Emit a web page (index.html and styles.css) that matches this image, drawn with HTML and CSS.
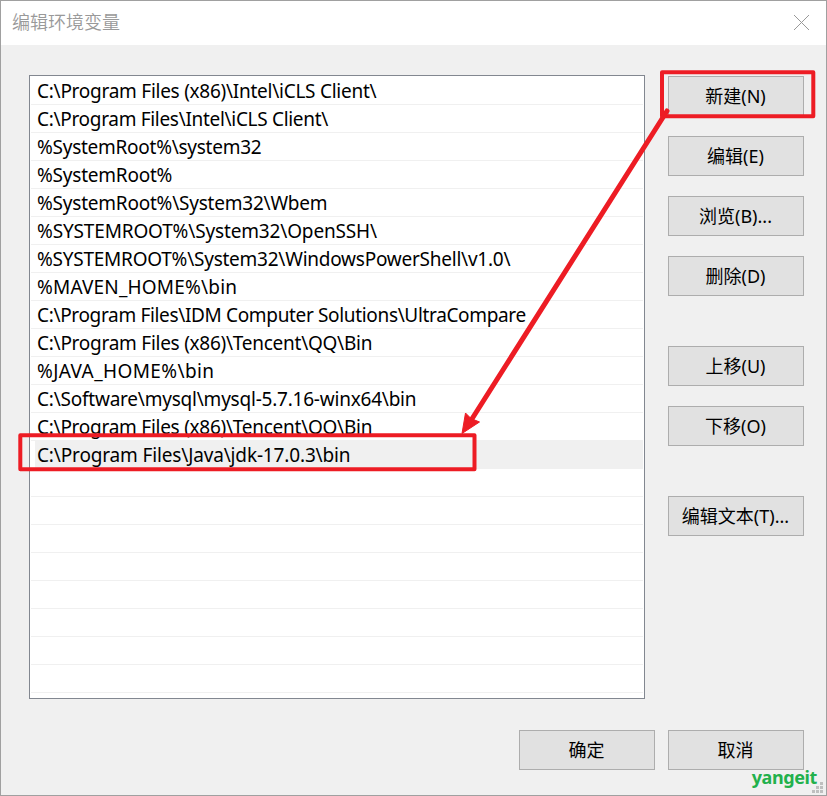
FILE: index.html
```html
<!DOCTYPE html>
<html lang="zh-CN">
<head>
<meta charset="utf-8">
<title>编辑环境变量</title>
<link rel="stylesheet" href="styles.css">
</head>
<body>
<main class="dialog">
  <header class="titlebar">
    <h1 class="title">编辑环境变量</h1>
    <svg class="close" viewBox="0 0 17 17" width="17" height="17"><path d="M1 1L16 16M16 1L1 16"/></svg>
  </header>
  <div class="content">
    <ul class="list">
      <li class="row">C:\Program Files (x86)\Intel\iCLS Client\</li>
      <li class="row">C:\Program Files\Intel\iCLS Client\</li>
      <li class="row">%SystemRoot%\system32</li>
      <li class="row">%SystemRoot%</li>
      <li class="row">%SystemRoot%\System32\Wbem</li>
      <li class="row">%SYSTEMROOT%\System32\OpenSSH\</li>
      <li class="row">%SYSTEMROOT%\System32\WindowsPowerShell\v1.0\</li>
      <li class="row">%MAVEN_HOME%\bin</li>
      <li class="row">C:\Program Files\IDM Computer Solutions\UltraCompare</li>
      <li class="row">C:\Program Files (x86)\Tencent\QQ\Bin</li>
      <li class="row">%JAVA_HOME%\bin</li>
      <li class="row">C:\Software\mysql\mysql-5.7.16-winx64\bin</li>
      <li class="row">C:\Program Files (x86)\Tencent\QQ\Bin</li>
      <li class="row selected">C:\Program Files\Java\jdk-17.0.3\bin</li>
      <li class="row"></li><li class="row"></li><li class="row"></li><li class="row"></li>
      <li class="row"></li><li class="row"></li><li class="row"></li><li class="row"></li>
    </ul>
    <div class="actions">
      <button class="btn">新建(N)</button>
      <button class="btn">编辑(E)</button>
      <button class="btn">浏览(B)...</button>
      <button class="btn">删除(D)</button>
      <button class="btn spaced">上移(U)</button>
      <button class="btn">下移(O)</button>
      <button class="btn spaced">编辑文本(T)...</button>
    </div>
  </div>
  <footer class="footer">
    <button class="btn">确定</button>
    <button class="btn">取消</button>
  </footer>
  <span class="watermark">yangeit</span>
  <svg class="grip" viewBox="0 0 11 11" width="11" height="11"><path d="M8 0h3v3h-3zM4 4h3v3h-3zM8 4h3v3h-3zM0 8h3v3h-3zM4 8h3v3h-3zM8 8h3v3h-3z"/></svg>
  <svg class="annotations" viewBox="0 0 827 796" width="827" height="796">
    <rect x="662" y="72.300" width="151.300" height="44"/>
    <rect x="20.300" y="435.300" width="454.200" height="34"/>
    <path class="line" d="M667 111L470 422"/>
    <path class="head" d="M462 433.500L465.500 413L471 418.500L479.500 422Z"/>
  </svg>
</main>
</body>
</html>
```
FILE: styles.css
```css
* { box-sizing: border-box; }
body { margin: 0; font-family: "Noto Sans", "Noto Sans CJK SC", sans-serif; }
.dialog {
  position: relative;
  width: 827px;
  height: 796px;
  overflow: hidden;
  background: #f0f0f0;
  border: 1px solid #a0a0a0;
}
.titlebar {
  display: flex;
  align-items: center;
  justify-content: space-between;
  height: 44px;
  padding: 0 16px 2px 11px;
  background: #fff;
}
.title { margin: 0 0 2px; color: #999; font: 350 18px/40px "Noto Sans CJK SC", sans-serif; }
.close { fill: none; stroke: #999; stroke-width: 1; }
.content { display: flex; gap: 23px; padding: 30px 22px 0 28px; }
.list {
  width: 616px;
  height: 624px;
  margin: 0;
  padding: 1px;
  overflow: hidden;
  list-style: none;
  background: #fff;
  border: 1px solid #828790;
}
.row {
  height: 28px;
  padding-left: 6px;
  border-bottom: 1px solid #f0f0f0;
  color: #000;
  font-size: 19px;
  line-height: 28px;
  letter-spacing: -0.26px;
  white-space: pre;
}
.row:nth-child(2) { letter-spacing: -0.31px; }
.row:nth-child(4), .row:nth-child(5), .row:nth-child(12) { letter-spacing: -0.22px; }
.row:nth-child(6), .row:nth-child(14) { letter-spacing: -0.15px; }
.row:nth-child(7) { letter-spacing: -0.24px; }
.row:nth-child(8) { letter-spacing: 0.19px; }
.row:nth-child(9) { letter-spacing: -0.34px; }
.row:nth-child(11) { letter-spacing: 0.4px; }
.selected { margin-left: 4px; padding-left: 2px; background: #f0f0f0; }
.actions { display: flex; flex-direction: column; gap: 20px; padding-top: 1px; }
.btn {
  width: 136px;
  height: 40px;
  padding: 0 1px 0 0;
  background: #e1e1e1;
  border: 1px solid #adadad;
  color: #000;
  font: 400 18px/38px "Noto Sans", "Noto Sans CJK SC", sans-serif;
}
.spaced { margin-top: 30px; }
.footer { display: flex; justify-content: flex-end; gap: 13px; padding: 31px 22px 0 0; }
.watermark {
  position: absolute;
  right: 9px;
  bottom: 5px;
  color: #22b14c;
  font: 700 18px/26px "Noto Sans", sans-serif;
  letter-spacing: -0.4px;
}
.grip { position: absolute; right: 3px; bottom: 2px; fill: #bfbfbf; }
.annotations { position: absolute; left: -1px; top: -1px; pointer-events: none; }
.annotations rect, .annotations .line { fill: none; stroke: #ed1c24; stroke-width: 4; stroke-linejoin: round; stroke-linecap: round; }
.annotations .line { stroke-width: 5; }
.annotations .head { fill: #ed1c24; stroke: #ed1c24; stroke-width: 1; }
```
